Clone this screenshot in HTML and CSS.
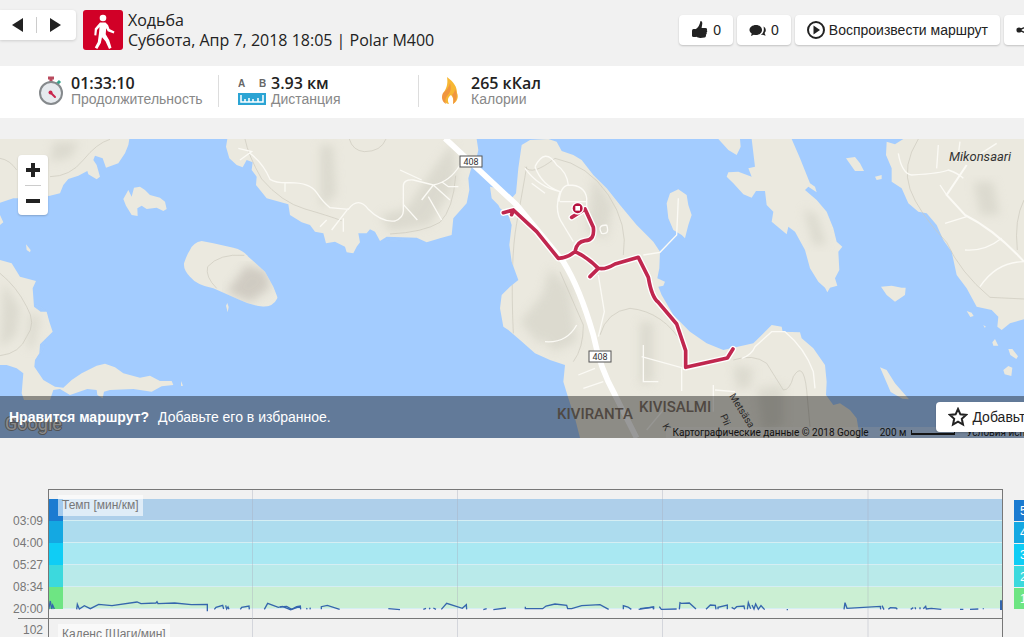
FILE: index.html
```html
<!DOCTYPE html>
<html lang="ru">
<head>
	<meta charset="utf-8">
	<meta name="viewport" content="width=device-width, initial-scale=1">
	<title>Ходьба</title>
	<link rel="stylesheet" href="styles.css">
</head>
<body>
	<header class="top">
		<nav class="pager">
			<button type="button" aria-label="Назад"><svg width="12" height="16" viewBox="0 0 12 16"><path d="M11 1v14L0 8z"/></svg></button>
			<button type="button" aria-label="Вперёд"><svg width="12" height="16" viewBox="0 0 12 16"><path d="M1 1v14l11-7z"/></svg></button>
		</nav>
		<svg class="sport" width="40" height="40" viewBox="0 0 40 40">
			<rect width="40" height="40" rx="3" fill="#d10027"/>
			<circle cx="20" cy="8" r="3.3" fill="#fff"/>
			<path fill="#fff" d="M17 12.500h5.500l2.500 2.500 1.500 4 5 2.500-.8 2-6-2.300-1.500-3-.5 6 3.500 6 2.300 7.500-2.500 1.200-3.500-7.700-3.500-4-1.200 5.700-3.500 6-2.500-1.500 3-5.500 1.200-9 .5-6-2.500 3-.7 5.500-2-.2.500-6.700z"/>
		</svg>
		<h1 class="title">Ходьба<br>Суббота, Апр 7, 2018 18:05 | Polar M400</h1>
		<div class="tools">
			<button type="button" class="btn">
				<svg width="18" height="18" viewBox="0 0 18 18"><path d="M9.500 0c1.800 0 2 2 1.700 3.300L10.600 7H14.500c1.500 0 2 1.400 1.300 2.200.7.700.6 1.900-.3 2.300.5.800.2 1.800-.6 2.200.4.900-.2 2.600-1.400 2.800l-4 .5c-1.700.1-3-.5-4-1.200L4.500 14.500V8.300C7 7 8.700 4 9.500 0z"/><rect x="1" y="8" width="5" height="8" rx="1.500"/></svg>
				0
			</button>
			<button type="button" class="btn">
				<svg width="18" height="18" viewBox="0 0 18 18"><path d="M7 4c3.600 0 6 2.200 6 5s-2.400 5-6 5c-.7 0-1.500-.1-2.200-.3L2 15l.7-2.600C1.200 11.500.5 10.300.5 9 .5 6.200 3.400 4 7 4z"/><path d="M14.500 5.500c1.500.8 2.300 2.200 2.300 3.800 0 1-.5 2-1.200 2.700l1 2.800-3-1c-.6.200-1.200.2-1.800.2 2.500-1.500 3.700-5 2.700-8.500z"/></svg>
				0
			</button>
			<button type="button" class="btn">
				<svg width="18" height="18" viewBox="1 1 18 18"><circle cx="10" cy="10" r="8" fill="none" stroke="#222" stroke-width="2"/><path d="M7.500 5.500v9l6.500-4.500z"/></svg>
				Воспроизвести маршрут
			</button>
			<button type="button" class="btn" aria-label="Поделиться">
				<svg width="18" height="18" viewBox="0 0 18 18"><circle cx="3" cy="9" r="2.600"/><circle cx="12" cy="5" r="2.600"/><circle cx="12" cy="13" r="2.600"/><path d="M12 5L3 9l9 4" fill="none" stroke="#222" stroke-width="1.500"/></svg>
			</button>
		</div>
	</header>

	<section class="stats">
		<div class="stat">
			<svg width="28" height="32" viewBox="0 0 28 32">
				<path d="M10 3h6M13 3v5" stroke="#b94a5e" stroke-width="3" fill="none"/>
				<path d="M19 9l3-3" stroke="#35a58c" stroke-width="3"/>
				<circle cx="13" cy="18" r="11" fill="#e6eaee" stroke="#85898c" stroke-width="2"/>
				<path d="M13 18l4 4" stroke="#c9254c" stroke-width="2" stroke-linecap="round"/>
				<circle cx="12.500" cy="17.500" r="2" fill="#c9254c"/>
			</svg>
			<p><strong>01:33:10</strong><span>Продолжительность</span></p>
		</div>
		<div class="stat">
			<svg width="28" height="32" viewBox="0 0 28 32">
				<text x="0" y="12" class="ab">A</text><text x="21" y="12" class="ab">B</text>
				<path fill="#2ba4d4" d="M0 18h28v12H0z"/>
				<path d="M3 20v7h22v-7M7 27v-3M11 27v-4M15 27v-3M20 27v-4" fill="none" stroke="#fff" stroke-width="1.500"/>
			</svg>
			<p><strong>3.93 км</strong><span>Дистанция</span></p>
		</div>
		<div class="stat">
			<svg width="28" height="32" viewBox="0 0 28 32">
				<path fill="#f7b733" d="M9 2c7 5 10 10 10 16 2 4 0 9-4 11 1-4 0-7-2-9-3 2-4 5-2 9-6-1-8-7-5-12 3-5 4-9 3-15z"/>
				<path fill="#f0953f" d="M5 18c4-3 6-6 7-10 2 6 0 10-3 13-2 3-2 5-1 8-4-2-5-7-3-11zM17 14c3 5 2 12-2 15 1-5 0-8-1-9 2-2 3-4 3-6z"/>
			</svg>
			<p><strong>265 кКал</strong><span>Калории</span></p>
		</div>
	</section>

	<section class="map">
		<svg class="terrain" viewBox="0 0 1024 299" preserveAspectRatio="xMidYMid slice">
			<defs>
				<filter id="soft"><feGaussianBlur stdDeviation="14"/></filter>
				<clipPath id="cape"><path d="M245 30L270 15 325 12 350 20 365 48 400 60 425 75 460 120 500 160 540 210 590 270 640 320 660 350 658 400 652 430 675 440 670 452 655 455 665 480 700 540 750 590 800 625 850 645 880 638 940 625 960 605 995 570 1025 575 1028 590 1080 592 1085 610 1120 640 1155 690 1160 740 1158 780 1180 810 1200 805 1230 825 1250 850 1260 909H420L405 850 385 790 370 740 375 690 330 675 285 655 240 615 205 585 190 575 180 520 185 480 210 455 235 435 215 380 208 330 215 270 205 240 180 220 175 210 155 190 150 155 175 160 215 190 228 175 235 100z"/></clipPath>
				<clipPath id="isle"><path d="M552 385Q560 360 570 345 580 322 605 318L640 325 700 338Q730 345 745 365L795 410 820 455 833 488Q820 515 790 515 750 510 720 495L640 460Q590 450 570 425 550 405 552 385z"/></clipPath>
			</defs>
			<!-- west shore and islands -->
			<g transform="translate(0 -4) scale(.33333)">
				<g class="land">
					<path d="M0 12H388L385 30 375 55 355 85 318 98 308 70 285 62 280 75 290 90 300 125 290 133 265 118 262 108 235 122 205 132 190 150 180 175 150 182 90 190 40 190 0 203z"/>
					<path d="M0 240l10 22-10 8zM78 328l14 17-2 7-10-7zM678 512l4-8 4 12-3 16zM543 738l6 14-6 1z"/>
					<path d="M370 192L385 165 395 185 402 158 420 155 435 165 450 180 480 188 495 200 500 222 490 228 470 218 440 222 425 212 412 220 413 243 395 240 378 212z"/>
					<path d="M0 375L35 385 60 425 108 438 98 460 102 515 122 530 140 530 148 560 158 590 120 628 118 655 105 675 103 695 130 735 165 755 190 758 215 735 245 715 290 692 315 686 345 697 370 715 420 728 450 722 480 738 515 738 520 750 485 754 455 770 400 762 330 765 312 770 308 790 292 780 290 765 262 762 210 780 180 762 160 765 150 795H72L65 775 70 715 50 700 20 690 0 690z"/>
				</g>
				<g clip-path="url(#isle)">
					<path class="land" d="M500 300h400v250H500z"/>
					<path class="hill" filter="url(#soft)" d="M680 470l60-80 60 20 10 50-60 40z"/>
				</g>
				<path class="hill light" filter="url(#soft)" d="M160 20h80l-30 50-60 10zM10 440l50 80-10 80-50 40zM90 530l30 20-20 90-20 0z"/>
				<path class="path" d="M0 70q30 5 50 35M150 125q60 0 100-50t80-62M0 415q50 40 80 100 30 50 0 90-20 50-80 57M650 460q-35-35-27-65 35-40 110-34"/>
			</g>
			<!-- northern peninsula -->
			<g transform="translate(220 -4) scale(.33333)">
				<path class="land" d="M22 12L18 35 28 70 50 90 68 97 80 75 98 82 95 105 110 125 108 150 140 190 205 208 210 240 245 262 270 270 285 290 310 295 318 325 345 320 375 335 380 352 400 355 410 335 420 322 415 295 440 295 450 283 465 290 480 318 500 305 590 308 620 322 660 310 695 300 700 250 740 205 748 165 745 130 755 95 765 90 775 45 770 12z"/>
				<path class="hill light" filter="url(#soft)" d="M300 30l40 0 10 150-50 40zM480 240l80-20 80-120 60-80 10 120-80 130-120 20z"/>
				<path class="path" d="M75 12q10 50 50 120 60 70 130 90t110 35M388 12q10 35 45 38 50 0 65-38M510 297q100-5 150-35 40-40 47-140"/>
				<path class="lane" d="M60 75l35-25-40-10M90 55q40 30 60 78 20 12 60 10 60 0 80 30 20 30 40 45l55 5q30-40 60 0 40 40 80 35 25-10 25-30v-75q0-20 30-18l60 15q50-10 80-60M540 105l65 30M195 145v25M335 285l50-65M370 250v40M300 275l20-20M640 150l50 45M665 140l20 15h30M605 195l35-45M625 185l40 70M550 208l42 47"/>
			</g>
			<!-- central cape with the route -->
			<g transform="translate(440 -4) scale(.33333)">
				<g clip-path="url(#cape)">
					<path class="land" d="M140 0h1150v920H140z"/>
					<path class="hill light" filter="url(#soft)" d="M330 400l60 60 20 160-70 30-60-80zM460 120l60 90-20 100-60-20zM240 560l100-120 20 60-60 130zM600 560l40 0 0 180-40 10zM880 690l60 10-10 60-40 0zM950 760l80-10 0 120-60 20z"/>
					<path class="path" d="M255 95q20 30 90-25 100 20 160 110t45 180M260 95q-10 60-30 170t-10 330M480 600q20-70 90-80 100 10 160 110M360 410l70 160q0 70-30 110M880 675q60-20 100 10l50 80q20 0 30-40 30-50 40 40l10 110"/>
				</g>
				<path class="land" d="M680 205L690 175 715 163 740 180 745 210 755 240 745 270 735 310 725 300 700 285 685 250z"/>
				<path class="lane" d="M715 190l-5 110-50 52-50 8M285 95q30-60 65-5 30 20 35 60 50 0 55 40v60M285 95q20 55 75 75-20 60 10 100l30 50M385 150q-25 5-28 50M360 200h80M275 145l40 30M255 100q40 55 105 70M475 420q10 60 18 110l-18 75M610 630v110l45 0M605 665l120 33v70M415 720l50-20M430 760l60-20M410 570q-30 55-95 50M500 270q-30 0-15 25 25 5 15-25M620 885l50-60M820 750v80M825 765l60 5M905 670q30-10 40-35l50-45h40q60 50 85 120l5 50"/>
				<path class="road" d="M15 10L230 210 370 380Q420 460 460 600 480 700 525 780L590 909"/>
				<path class="track halo" d="M190 233l30-8-5 14M220 225l70 65 65 80q25 0 50-20 5-30 30-33 30 0 25-40l-25-55-40 25M405 350q35 15 70 50l-25 25M475 400q20 5 50-13l70-20 30 60q10 60 30 75l55 65 27 80v50l125-28 17-27"/>
				<path class="track" d="M190 233l30-8-5 14M220 225l70 65 65 80q25 0 50-20 5-30 30-33 30 0 25-40l-25-55-40 25M405 350q35 15 70 50l-25 25M475 400q20 5 50-13l70-20 30 60q10 60 30 75l55 65 27 80v50l125-28 17-27"/>
				<circle cx="413" cy="220" r="17" fill="#b5123f" stroke="#fff" stroke-width="4"/>
				<path fill="#fff" d="M406 213h14v14h-14z"/>
			</g>
			<!-- eastern islands -->
			<g transform="translate(700 -4) scale(.33333)">
				<g class="land">
					<path d="M155 12L165 95 145 100 155 125 115 110 85 112 80 125 100 145 130 178 155 188 168 168 195 168 200 210 220 230 215 260 260 298 265 275 285 290 315 345 330 400 355 440 375 458 382 472 390 458 412 452 405 430 418 405 415 350 427 335 410 320 400 280 380 230 350 195 315 165 325 155 350 172 345 155 330 145 300 70 275 12z"/>
					<path d="M55 12L120 12 122 35 110 60 85 45zM438 70L465 66 480 85 492 108 465 108zM525 125l20-5v12l-15 3z"/>
					<path d="M560 20L558 60 575 100 575 140 605 160 625 205 655 230 680 235 710 270 730 315 755 350 770 420 800 460 830 515 875 525 895 545 892 575 905 585 930 565 972 553V12H610L585 28z"/>
					<path d="M543 455L575 452 605 458 617 458 615 480 585 500 560 480zM800 528l15 5 6 10-10 3zM850 570l8 5-4 3zM877 622l8-10 10 20h-15zM925 642h12l17 22-5 8-18-12zM910 705l15-12 12 5-3 25-20-5zM540 697l20 8 25 40 42 48-20-2-35-20z"/>
				</g>
				<path class="hill light" filter="url(#soft)" d="M820 140l60 0 20 100-60 0zM310 220l40 20 30 90-40 0z"/>
				<path class="path" d="M655 12q-50 80-25 150t110 160q40 90 130 165l102 5M972 195q-30 60-20 150"/>
				<path class="lane" d="M595 55q10 60 40 65 90-5 110-15 30 10 45 25M715 30l-5 70M720 150l20 30M735 265l65-20M795 345q60 5 110-35M840 455q50-75 132-75M780 20l-8 60M820 70l70-45"/>
				<path class="lane wide" d="M800 90l-60 90 55 60q90 45 177 140"/>
			</g>
			<g class="shield">
				<rect x="460" y="17" width="22" height="11"/><text x="471" y="26">408</text>
				<rect x="589" y="212" width="22" height="11"/><text x="600" y="221">408</text>
			</g>
			<text class="isl" x="949" y="22">Mikonsaari</text>
			<text class="place" x="557" y="280">KIVIRANTA</text>
			<text class="place" x="639" y="273">KIVISALMI</text>
			<text class="street" transform="translate(729 257) rotate(58)">Metsäsa</text>
			<text class="street" transform="translate(720 277) rotate(66)">Pii</text>
			<text class="street" transform="translate(662 287) rotate(60)">K</text>
			<text class="google" x="5" y="291">Google</text>
		</svg>
		<div class="zoom">
			<button type="button" aria-label="Приблизить"><svg width="14" height="14" viewBox="0 0 14 14"><path d="M5 0h4v5h5v4H9v5H5V9H0V5h5z"/></svg></button>
			<button type="button" aria-label="Отдалить"><svg width="14" height="14" viewBox="0 0 14 14"><path d="M0 5h14v4H0z"/></svg></button>
		</div>
		<div class="credits">
			<span>Картографические данные © 2018 Google</span>
			<span class="scale">200 м <i></i></span>
			<a href="#">Условия использования</a>
		</div>
		<div class="favbar">
			<strong>Нравится маршрут?</strong>
			<span>Добавьте его в избранное.</span>
			<button type="button" class="btn fav">
				<svg width="20" height="20" viewBox="0 0 20 20"><path d="M10 2l2.400 5.300 5.600.6-4.200 3.900 1.200 5.700-5-2.900-5 2.900 1.200-5.700L2 7.900l5.600-.6z" fill="none" stroke="#222" stroke-width="2"/></svg>
				Добавьте в избранное
			</button>
		</div>
	</section>

	<section class="chart">
		<div class="axis">
			<span>03:09</span><span>04:00</span><span>05:27</span><span>08:34</span><span>20:00</span>
			<span class="next">102</span>
		</div>
		<div class="plot">
			<div class="pace">
				<div class="band z5"></div>
				<div class="band z4"></div>
				<div class="band z3"></div>
				<div class="band z2"></div>
				<div class="band z1"></div>
				<span class="caption">Темп [мин/км]</span>
			</div>
			<div class="cadence"><span class="caption">Каденс [Шаги/мин]</span></div>
			<svg class="lines" viewBox="0 0 953 160" preserveAspectRatio="none">
				<path class="grid" d="M203.500 0v160M408.500 0v160M613.500 0v160M819 0v160"/>
				<g class="speed">
					<path transform="translate(-49 -10) scale(.33333)" d="M146 388l5-25 4 24 3-12 5 12M230 388l2-15 6 14 15-10 18 9 25-13 40 4 75-11 12 5 45-2 3-4 3 6 50-2 50 5 48-1v21M643 388l5-6 20-6 3 11M677 376l3 11 4-6 3 7M721 388l4-6 22-4 1 10M793 388l10-18 32 12 12-3 25 10 20-7 10 0"/>
					<path transform="translate(231 -10) scale(.33333)" d="M0 381l20-2 15 9 15-8 11-2 1 10M80 388l1-4M90 388l1-5M124 388v-8l18-4 37 12M325 386l35 3M430 388l8-3M448 388l2-5M460 384l8 4M484 388l16-18 47 15 12-11 1 14M610 389l10-3M640 389l38-5M736 380v6h52l10-8 27-6 35 4 3 10h12l30-9 55-3 26 14M1030 388v-11l14 4 10 7M1076 388l44-7v7"/>
					<path transform="translate(591 -10) scale(.33333)" d="M0 386l41-5v7M58 380l6 8 46-1M118 388l2-20 4 2 24-1 20 18M198 388l13-13 15 1 2 12M234 388v-6l28-7v13M275 382l8 5 7-7 22-2 2 10M322 388l3-20 7 18M336 375l6 12 5-15 8 16 8-11 11 12M440 389h4M612 388l3-20 6 17 100-6 1 9M726 377l6 12M745 388l6-5 17 1 4 4M812 388l8-5M825 382l2 6M840 388v-6M850 386l7-7 2 8 15-2 30 3M960 388h10M990 388l25-1M1030 385v3M1082 363h2v25h-2z"/>
				</g>
			</svg>
		</div>
		<ul class="zones">
			<li class="z5">5</li><li class="z4">4</li><li class="z3">3</li><li class="z2">2</li><li class="z1">1</li>
		</ul>
	</section>
</body>
</html>
```
FILE: styles.css
```css
* {
	box-sizing: border-box;
}
body {
	margin: 0;
	height: 100vh;
	overflow: hidden;
	background: #f1f1f1;
	color: #222;
	font-family: "Liberation Sans", Arial, sans-serif;
	font-size: 14px;
}
button {
	border: 0;
	padding: 0;
	background: none;
	font: inherit;
	color: inherit;
	cursor: pointer;
}
svg {
	display: block;
	flex: none;
}
button svg {
	fill: #222;
}

/* header */
.top {
	display: flex;
	align-items: flex-start;
	height: 66px;
	padding-top: 10px;
}
.pager {
	display: flex;
	width: 76px;
	height: 30px;
	margin-right: 7px;
	padding: 7px 3px 7px 0;
	background: #fff;
	border-radius: 0 4px 4px 0;
	box-shadow: 0 1px 3px rgba(0,0,0,.15);
}
.pager button {
	display: flex;
	flex: 1;
	align-items: center;
	justify-content: center;
}
.pager button + button {
	border-left: 1px solid #ccc;
}
.title {
	margin: 0 0 0 5px;
	font: 16px/20px "Open Sans", "Noto Sans", sans-serif;
	white-space: nowrap;
}
.tools {
	display: flex;
	gap: 4px;
	margin: 5px -22px 0 auto;
}
.btn {
	display: flex;
	align-items: center;
	gap: 4px;
	height: 30px;
	padding: 0 12px;
	background: #fff;
	border-radius: 4px;
	box-shadow: 0 1px 2px rgba(0,0,0,.2);
	white-space: nowrap;
}

/* totals */
.stats {
	display: flex;
	height: 52px;
	padding: 9px 18px 11px;
	background: #fff;
}
.stat {
	display: flex;
	gap: 5px;
	width: 200px;
	padding-left: 20px;
}
.stat + .stat {
	padding-left: 19px;
	border-left: 1px solid #ddd;
}
.stat p {
	margin: 0;
}
.stat strong,
.stat span {
	display: block;
	line-height: 16px;
}
.stat strong {
	font-family: "Open Sans", "Noto Sans", sans-serif;
	font-size: 16px;
	font-weight: 600;
}
.stat span {
	color: #888;
}
.ab {
	font-size: 10px;
	font-weight: bold;
	fill: #666;
}

/* map */
.map {
	position: relative;
	height: 299px;
	margin-top: 21px;
	overflow: hidden;
	background: #a3ccff;
}
.terrain {
	width: 100%;
	height: 100%;
}
.land {
	fill: #ebe9df;
}
.hill {
	fill: #c9c4bb;
	opacity: .8;
}
.hill.light {
	fill: #d2d0c5;
	opacity: .6;
}
.path {
	fill: none;
	stroke: #cbc8bd;
	stroke-width: 2;
}
.lane {
	fill: none;
	stroke: #fbfaf5;
	stroke-width: 4;
}
.lane.wide {
	stroke-width: 6;
}
.road {
	fill: none;
	stroke: #fff;
	stroke-width: 17;
}
.track {
	fill: none;
	stroke: #c0274f;
	stroke-width: 11;
	stroke-linejoin: round;
	stroke-linecap: round;
}
.track.halo {
	stroke: #fff;
	stroke-width: 19;
}
.shield rect {
	fill: #fff;
	stroke: #555;
}
.shield text {
	font: 9px Roboto, sans-serif;
	fill: #333;
	text-anchor: middle;
}
.isl {
	font: italic 13px Roboto, sans-serif;
	fill: #333;
}
.place {
	font: 500 15px Roboto, sans-serif;
	fill: #85796f;
}
.street {
	font: 10px Roboto, sans-serif;
	fill: #444;
}
.google {
	font: 18px Roboto, sans-serif;
	fill: #e8e8e8;
	stroke: #888;
	stroke-width: 2px;
	paint-order: stroke;
}
.zoom {
	position: absolute;
	top: 16px;
	left: 18px;
	width: 30px;
	padding: 0 7px;
	background: #fff;
	border-radius: 4px;
	box-shadow: 0 1px 2px rgba(0,0,0,.2);
}
.zoom button {
	display: flex;
	align-items: center;
	justify-content: center;
	width: 100%;
	height: 30px;
}
.zoom button + button {
	border-top: 1px solid #ccc;
}
.favbar {
	position: absolute;
	right: 0;
	bottom: 0;
	left: 0;
	display: flex;
	align-items: center;
	gap: 9px;
	height: 42px;
	padding-left: 9px;
	background: rgba(0,0,0,.4);
	color: #fff;
	white-space: nowrap;
}
.fav {
	margin: 0 -105px 0 auto;
	color: #222;
}
.credits {
	position: absolute;
	bottom: 0;
	left: 65%;
	display: flex;
	gap: 11px;
	padding-left: 7px;
	background: rgba(255,255,255,.3);
	color: #222;
	font: 10px/11px Roboto, sans-serif;
	white-space: nowrap;
}
.credits a {
	color: inherit;
	text-decoration: none;
}
.scale {
	display: flex;
	align-items: center;
	gap: 5px;
}
.scale i {
	width: 44px;
	height: 5px;
	border: solid #222;
	border-width: 0 1px 2px;
}

/* chart */
.chart {
	display: grid;
	grid-template-columns: 48px 1fr 10px;
	margin-top: 51px;
	color: #777;
	font-size: 12px;
}
.axis {
	display: flex;
	flex-direction: column;
	padding-top: 21px;
	text-align: right;
}
.axis span {
	height: 22px;
	padding-right: 5px;
	line-height: 22px;
}
.axis .next {
	margin: -2px 0 0 18px;
	border-top: 1px solid #777;
}
.plot {
	position: relative;
	height: 162px;
	margin-right: 11px;
	border: 1px solid #777;
}
.pace {
	position: relative;
	height: 129px;
	padding-top: 9px;
	border-bottom: 1px solid #777;
}
.band {
	height: 22px;
	border-left: 14px solid;
	box-shadow: inset 0 -1px #d5eef3;
}
.band.z5 { background: #aecfea; border-left-color: #1b7bd1; }
.band.z4 { background: #addcee; border-left-color: #14a8e2; }
.band.z3 { background: #a9e8f2; border-left-color: #0fcdf5; }
.band.z2 { background: #b9eaea; border-left-color: #3cd9dd; }
.band.z1 { background: #cbefd3; border-left-color: #6ee583; }
.cadence {
	position: relative;
}
.caption {
	position: absolute;
	top: 5px;
	left: 9px;
	padding: 0 4px;
	background: rgba(255,255,255,.6);
	line-height: 21px;
}
.lines {
	position: absolute;
	top: 0;
	left: 0;
	width: 100%;
	height: 100%;
}
.grid {
	fill: none;
	stroke: rgba(170,175,190,.4);
}
.speed {
	fill: none;
	stroke: #3566ad;
	stroke-width: 4;
}
.zones {
	margin: 0;
	padding: 11px 0 0;
	list-style: none;
	color: #fff;
}
.zones li {
	width: 40px;
	height: 22px;
	padding-left: 6px;
	border-bottom: 1px solid #f1f1f1;
	line-height: 22px;
}
.zones .z5 { background: #1b7bd1; }
.zones .z4 { background: #14a8e2; }
.zones .z3 { background: #0fcdf5; }
.zones .z2 { background: #3cd9dd; }
.zones .z1 { background: #6ee583; }
```
